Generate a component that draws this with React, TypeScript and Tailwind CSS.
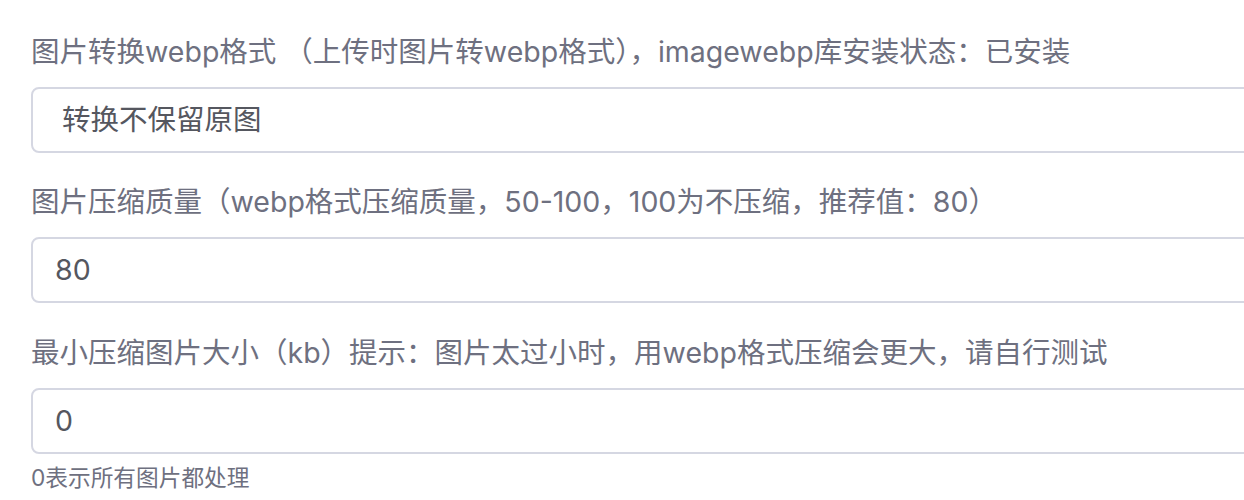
import React from "react";

const font = { fontFamily: '"Inter", "Noto Sans CJK SC", sans-serif' };

function Label({ children }: { children: React.ReactNode }) {
  return (
    <div className="text-[28.5px] leading-[40px] text-[#6e7080] whitespace-nowrap">{children}</div>
  );
}

function Box({ children, pad }: { children: React.ReactNode; pad: string }) {
  return (
    <div
      className={`w-[1250px] h-[66px] shrink-0 rounded-[8px] border-2 border-[#d5d7e2] bg-white flex items-center text-[28.5px] text-[#55575f] ${pad}`}
    >
      {children}
    </div>
  );
}

export default function App() {
  return (
    <div className="w-full h-[500px] overflow-hidden bg-white" style={font}>
      <div className="flex flex-col pl-[31px] pt-[32px]">
        <Label>图片转换webp格式 （上传时图片转webp格式），imagewebp库安装状态：已安装</Label>
        <div className="mt-[15px]">
          <Box pad="pl-[29px]">转换不保留原图</Box>
        </div>
        <div className="mt-[29px]">
          <Label>图片压缩质量（webp格式压缩质量，50-100，100为不压缩，推荐值：80）</Label>
        </div>
        <div className="mt-[15px]">
          <Box pad="pl-[22px]">80</Box>
        </div>
        <div className="mt-[30px]">
          <Label>最小压缩图片大小（kb）提示：图片太过小时，用webp格式压缩会更大，请自行测试</Label>
        </div>
        <div className="mt-[15px]">
          <Box pad="pl-[22px]">0</Box>
        </div>
        <div className="mt-[9px] text-[22.7px] leading-[30px] text-[#6e7080]">0表示所有图片都处理</div>
      </div>
    </div>
  );
}
